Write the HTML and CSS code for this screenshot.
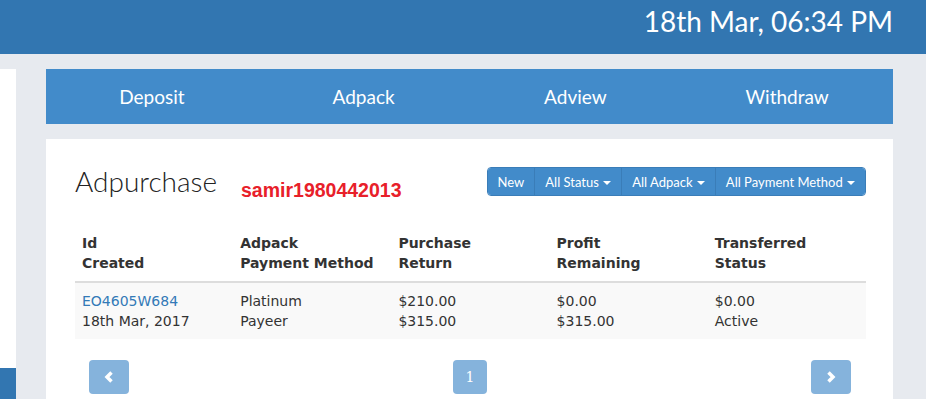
FILE: index.html
```html
<!DOCTYPE html>
<html lang="en">

<head>
    <meta charset="UTF-8">
    <meta name="viewport" content="width=device-width, initial-scale=1.0">
    <title>Adpurchase</title>
    <link rel="stylesheet" href="styles.css">
</head>

<body>
    <div class="topbar">
        <div class="clock">18th Mar, 06:34 PM</div>
    </div>

    <div class="layout">
        <div class="sidebar">
            <div class="sidebarFoot"></div>
        </div>

        <div class="main">
            <div class="menu">
                <a href="#">Deposit</a>
                <a href="#">Adpack</a>
                <a href="#">Adview</a>
                <a href="#">Withdraw</a>
            </div>

            <div class="card">
                <div class="cardHead">
                    <h2>Adpurchase</h2>
                    <span class="user">samir1980442013</span>
                    <div class="btnGroup">
                        <button>New</button>
                        <button>All Status <span class="caret"></span></button>
                        <button>All Adpack <span class="caret"></span></button>
                        <button>All Payment Method <span class="caret"></span></button>
                    </div>
                </div>

                <table>
                    <thead>
                        <tr>
                            <th>Id<br>Created</th>
                            <th>Adpack<br>Payment Method</th>
                            <th>Purchase<br>Return</th>
                            <th>Profit<br>Remaining</th>
                            <th>Transferred<br>Status</th>
                        </tr>
                    </thead>
                    <tbody>
                        <tr>
                            <td><a href="#">EO4605W684</a><br>18th Mar, 2017</td>
                            <td>Platinum<br>Payeer</td>
                            <td>$210.00<br>$315.00</td>
                            <td>$0.00<br>$315.00</td>
                            <td>$0.00<br>Active</td>
                        </tr>
                    </tbody>
                </table>

                <div class="pager">
                    <button class="pageBtn arrow">
                        <svg width="12" height="14" viewBox="0 0 12 14"><polyline points="8.5,2.5 4,7 8.5,11.5" fill="none" stroke="#fff" stroke-width="3.5" /></svg>
                    </button>
                    <button class="pageBtn num">1</button>
                    <button class="pageBtn arrow">
                        <svg width="12" height="14" viewBox="0 0 12 14"><polyline points="3.5,2.5 8,7 3.5,11.5" fill="none" stroke="#fff" stroke-width="3.5" /></svg>
                    </button>
                </div>
            </div>
        </div>
    </div>
</body>

</html>
```

FILE: styles.css
```css
body {
    margin: 0;
    height: 100vh;
    overflow: hidden;
    background-color: #e7eaef;
    font-family: "DejaVu Sans", Verdana, sans-serif;
    color: #333;
}

.topbar {
    height: 54px;
    background-color: #3276b1;
    display: flex;
    justify-content: flex-end;
    align-items: center;
    padding-right: 33px;
}

.clock {
    font-family: Lato, sans-serif;
    font-size: 28px;
    color: white;
    margin-top: -12px;
}

.layout {
    display: flex;
    gap: 30px;
    padding-top: 15px;
    height: calc(100vh - 69px);
}

.sidebar {
    width: 16px;
    background-color: white;
    display: flex;
    flex-direction: column;
}

.sidebarFoot {
    margin-top: auto;
    height: 31px;
    background-color: #3276b1;
}

.main {
    width: 847px;
}

.menu {
    height: 55px;
    background-color: #428bca;
    display: grid;
    grid-template-columns: repeat(4, 1fr);
    align-items: center;
    text-align: center;
}

.menu a {
    font-family: Lato, sans-serif;
    font-size: 19px;
    color: white;
    text-decoration: none;
}

.card {
    margin-top: 15px;
    background-color: white;
    padding: 28px 27px 20px 29px;
}

.cardHead {
    display: flex;
    align-items: flex-start;
    height: 29px;
}

.cardHead h2 {
    margin: 0;
    font-family: Lato, sans-serif;
    font-weight: 300;
    font-size: 28px;
    color: #222;
    width: 166px;
    line-height: 29px;
}

.user {
    font-family: "Liberation Sans", Arial, sans-serif;
    font-weight: bold;
    font-size: 19.5px;
    color: #e8202a;
    margin-top: 12px;
}

.btnGroup {
    margin-left: auto;
    display: flex;
    height: 29px;
    border: 1px solid #3a7db8;
    border-radius: 4px;
    overflow: hidden;
    box-sizing: border-box;
}

.btnGroup button {
    font-family: Lato, sans-serif;
    font-size: 13px;
    color: white;
    background-color: #428bca;
    border: none;
    border-left: 1px solid #3a7db8;
    padding: 0 10px;
}

.btnGroup button:first-child {
    border-left: none;
}

.caret {
    display: inline-block;
    width: 0;
    height: 0;
    margin-left: 1px;
    vertical-align: middle;
    border-top: 4px solid white;
    border-left: 4px solid transparent;
    border-right: 4px solid transparent;
}

table {
    margin-top: 29px;
    width: 100%;
    border-collapse: collapse;
    font-size: 14px;
    line-height: 20px;
}

th,
td {
    width: 20%;
    text-align: left;
    padding: 8px 7px;
    vertical-align: top;
}

th {
    border-bottom: 2px solid #ddd;
}

tbody tr {
    background-color: #f9f9f9;
}

td a {
    color: #337ab7;
    text-decoration: none;
}

.pager {
    margin-top: 21px;
    padding: 0 15px 0 14px;
    display: flex;
    justify-content: space-between;
}

.pageBtn {
    height: 34px;
    border: none;
    border-radius: 4px;
    background-color: #85b3dc;
    color: white;
    display: flex;
    align-items: center;
    justify-content: center;
    font-size: 14px;
}

.arrow {
    width: 40px;
}

.num {
    width: 34px;
    font-family: "DejaVu Serif", serif;
}
```
